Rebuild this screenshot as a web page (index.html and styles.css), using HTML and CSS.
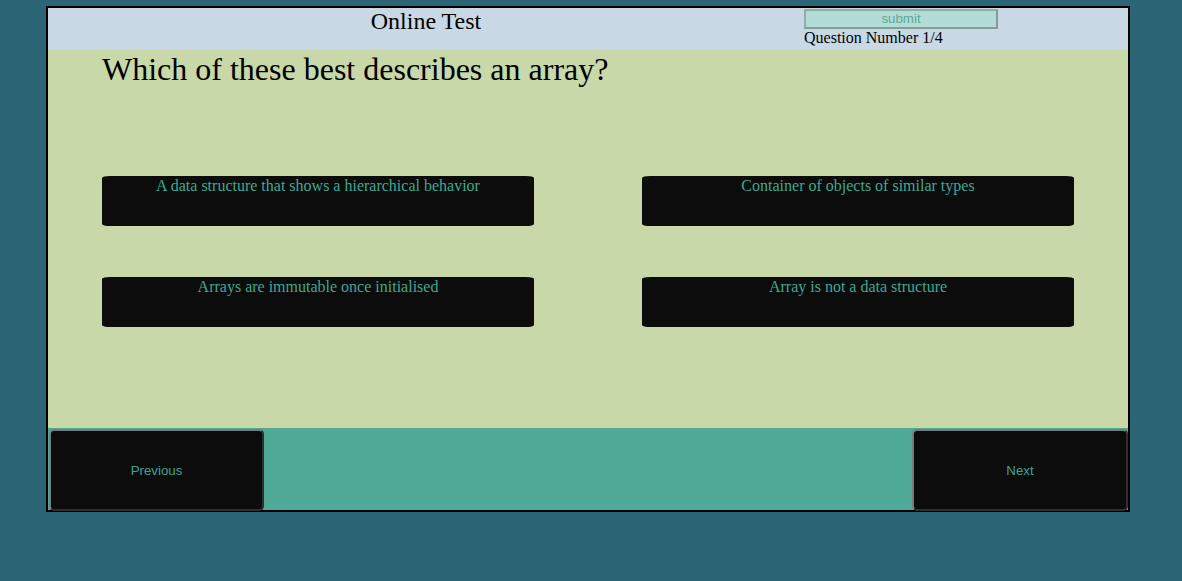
FILE: index.html
```html
<!DOCTYPE html>
<html>
<head>
<meta charset="utf-8">
<link rel="stylesheet" href="styles.css">
</head>
<body>
<div class="app">
  <header class="top">
    <div class="title">Online Test</div>
    <div class="status">
      <button class="submit">submit</button>
      <div class="qnum">Question Number 1/4</div>
    </div>
  </header>
  <main class="main">
    <h1 class="question">Which of these best describes an array?</h1>
    <div class="options">
      <button class="opt">A data structure that shows a hierarchical behavior</button>
      <button class="opt">Container of objects of similar types</button>
      <button class="opt">Arrays are immutable once initialised</button>
      <button class="opt">Array is not a data structure</button>
    </div>
  </main>
  <footer class="nav">
    <button class="navbtn prev">Previous</button>
    <button class="navbtn next">Next</button>
  </footer>
</div>
</body>
</html>
```
FILE: styles.css
```css
html, body {
  margin: 0;
  padding: 0;
  background: #2c6676;
  height: 100%;
}
body {
  font-family: "Liberation Serif", "Times New Roman", serif;
}
.app {
  width: 1080px;
  margin: 6px 0 0 46px;
  border: 2px solid #000;
  background: #c8d8a8;
}
.top {
  display: grid;
  grid-template-columns: 756px 194px;
  height: 42px;
  background: #c9d8e5;
}
.title {
  text-align: center;
  font-size: 24px;
  color: #000;
}
.status {
  display: flex;
  flex-direction: column;
  align-items: flex-start;
}
.submit {
  margin-top: 1px;
  width: 194px;
  height: 20px;
  padding: 0 0 2px;
  background: #b4dcd6;
  border: 2px solid #8fa9a3;
  border-color: #93aba5 #869c97 #869c97 #93aba5;
  color: #5aaa9a;
  font-family: "Liberation Sans", Arial, sans-serif;
  font-size: 13.3px;
}
.qnum {
  font-size: 16px;
  color: #000;
}
.main {
  height: 378px;
  padding: 1px 54px 0 54px;
  box-sizing: border-box;
}
.question {
  margin: 0;
  font-size: 32px;
  font-weight: normal;
  color: #000;
}
.options {
  display: grid;
  grid-template-columns: 432px 432px;
  grid-auto-rows: 50px;
  column-gap: 108px;
  row-gap: 51px;
  margin-top: 88px;
}
.opt {
  display: flex;
  justify-content: center;
  align-items: flex-start;
  padding: 1px 4px 0;
  border: none;
  border-radius: 8px / 2px;
  background: #0d0c0d;
  color: #3ea892;
  font-family: "Liberation Serif", "Times New Roman", serif;
  font-size: 16px;
}
.nav {
  display: flex;
  justify-content: space-between;
  align-items: flex-start;
  height: 82px;
  background: #50aa98;
}
.navbtn {
  width: 216px;
  border: 2px solid;
  border-color: #7a7a7a #2e2e2e #2e2e2e #7a7a7a;
  border-radius: 5px;
  background: #0d0c0d;
  color: #3fa28e;
  font-family: "Liberation Sans", Arial, sans-serif;
  font-size: 13.3px;
  padding: 0;
  margin-top: 1px;
  height: 82px;
}
.prev {
  margin-left: 1px;
  width: 215px;
}
```
